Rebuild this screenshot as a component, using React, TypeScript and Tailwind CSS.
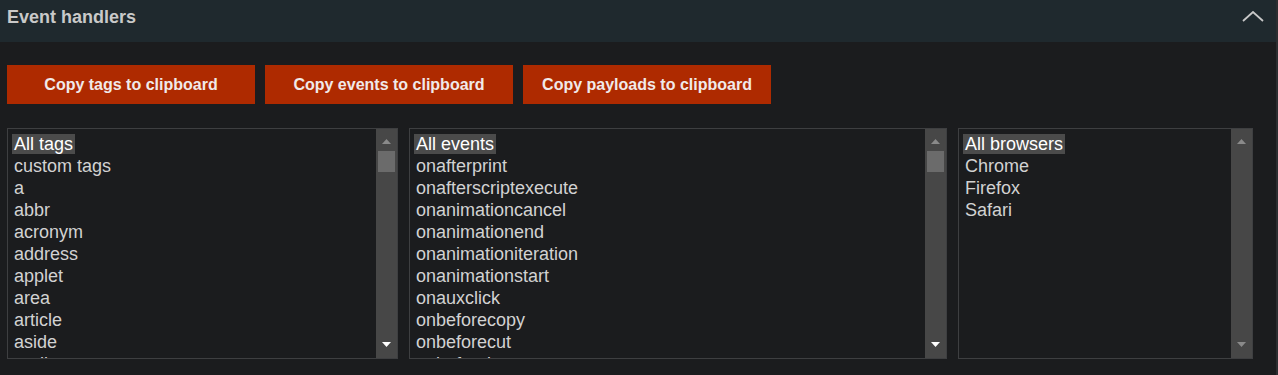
import type { ReactElement } from 'react';

const TAGS = ['All tags', 'custom tags', 'a', 'abbr', 'acronym', 'address', 'applet', 'area', 'article', 'aside', 'audio'];
const EVENTS = [
  'All events',
  'onafterprint',
  'onafterscriptexecute',
  'onanimationcancel',
  'onanimationend',
  'onanimationiteration',
  'onanimationstart',
  'onauxclick',
  'onbeforecopy',
  'onbeforecut',
  'onbeforeinput',
];
const BROWSERS = ['All browsers', 'Chrome', 'Firefox', 'Safari'];

function ListBox({ items, width, scrollable }: { items: string[]; width: string; scrollable: boolean }): ReactElement {
  return (
    <div className={`${width} flex h-[231px] border border-[#3e3f41] bg-[#1b1c1e]`}>
      <ul className="min-w-0 flex-1 overflow-hidden pt-[4px] pl-[4px] text-[18px] leading-[22px] text-[#d2d2d2]">
        {items.map((item, i) => (
          <li key={item} className="h-[22px] whitespace-nowrap">
            <span className={i === 0 ? 'bg-[#4b4b4b] px-[2px] text-white' : 'px-[2px]'}>{item}</span>
          </li>
        ))}
      </ul>
      {/* fake scrollbar, drawn so it looks the same in every run */}
      <div className="flex w-[21px] flex-col items-center bg-[#474747]">
        <svg width="9" height="6" viewBox="0 0 9 6" className="mt-[10px]">
          <polygon points="4.5,0 9,5 0,5" fill="#8a8a8a" />
        </svg>
        {scrollable ? <div className="mt-[6px] h-[21px] w-[17px] bg-[#6b6b6b]" /> : null}
        <div className="flex-1" />
        <svg width="9" height="6" viewBox="0 0 9 6" className="mb-[10px]">
          <polygon points="0,0 9,0 4.5,5" fill={scrollable ? '#ffffff' : '#8a8a8a'} />
        </svg>
      </div>
    </div>
  );
}

export default function App(): ReactElement {
  const buttons = ['Copy tags to clipboard', 'Copy events to clipboard', 'Copy payloads to clipboard'];

  return (
    <div
      className="h-[375px] w-[1278px] overflow-hidden border-r-2 border-[#2c2e31] bg-[#1b1c1e]"
      style={{ fontFamily: '"Liberation Sans", Arial, sans-serif' }}
    >
      <header className="flex h-[42px] items-center justify-between bg-[#1f292e] pr-[12px] pl-[7px]">
        <h2 className="-mt-[8px] text-[18px] font-bold text-[#c9c9c9]">Event handlers</h2>
        <svg width="22" height="11" viewBox="0 0 22 11" className="-mt-[10px]" fill="none">
          <polyline points="1,10 11,1 21,10" stroke="#c8c8c8" strokeWidth="1.8" />
        </svg>
      </header>

      <div className="px-[7px]">
        <div className="mt-[23px] flex gap-[10px]">
          {buttons.map((label) => (
            <button
              key={label}
              type="button"
              className="h-[39px] w-[248px] bg-[#ae2a00] text-[16px] font-bold text-[#f1e9e9]"
            >
              {label}
            </button>
          ))}
        </div>

        <div className="mt-[24px] flex gap-[11px]">
          <ListBox items={TAGS} width="w-[391px]" scrollable />
          <ListBox items={EVENTS} width="w-[538px]" scrollable />
          <ListBox items={BROWSERS} width="w-[295px]" scrollable={false} />
        </div>
      </div>
    </div>
  );
}
